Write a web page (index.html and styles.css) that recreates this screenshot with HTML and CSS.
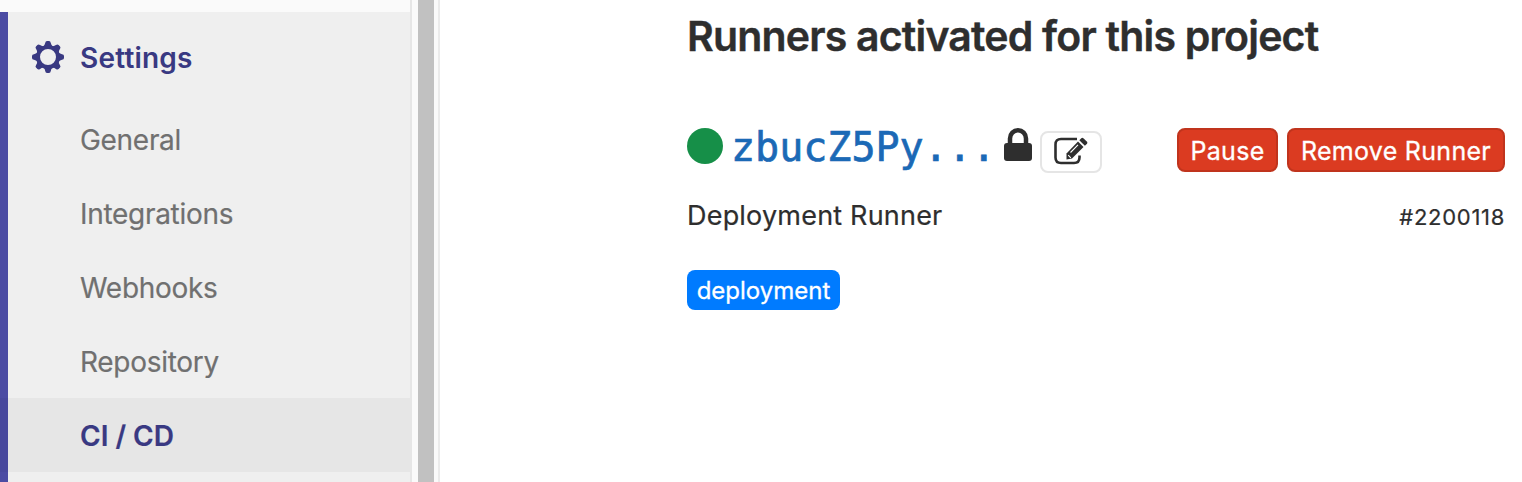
FILE: index.html
```
<!DOCTYPE html>
<html lang="en">
<head>
<meta charset="utf-8">
<title>CI / CD Settings</title>
<link rel="stylesheet" href="styles.css">
</head>
<body>
<div class="page">
  <aside class="sidebar">
    <nav class="menu">
      <a class="menu-title">
        <svg class="gear" viewBox="0 0 32 32" width="32" height="32"><g fill="#393982"><path id="t" d="M10.500 6.500Q12.800 4.500 13.200 2Q13.500 0 15 0H17Q18.500 0 18.800 2Q19.200 4.500 21.500 6.500Z"/><use href="#t" transform="rotate(45 16 16)"/><use href="#t" transform="rotate(90 16 16)"/><use href="#t" transform="rotate(135 16 16)"/><use href="#t" transform="rotate(180 16 16)"/><use href="#t" transform="rotate(225 16 16)"/><use href="#t" transform="rotate(270 16 16)"/><use href="#t" transform="rotate(315 16 16)"/></g><circle cx="16" cy="16" r="10" fill="#efefef" stroke="#393982" stroke-width="4"/></svg>
        <span class="title-text">Settings</span>
      </a>
      <a class="item">General</a>
      <a class="item">Integrations</a>
      <a class="item">Webhooks</a>
      <a class="item">Repository</a>
      <a class="item active">CI / CD</a>
    </nav>
  </aside>
  <div class="scroll"><div class="thumb"></div></div>
  <main class="content">
    <h1>Runners activated for this project</h1>
    <div class="runner">
      <span class="status"></span>
      <a class="token">zbucZ5Py...</a>
      <svg class="lock" viewBox="0 0 28 34" width="28" height="34"><path d="M6 17V10.500a8 8.250 0 0 1 16 0V17" fill="none" stroke="#2e2e2e" stroke-width="4.500"/><rect y="15" width="28" height="18" rx="3" fill="#2e2e2e"/></svg>
      <a class="edit"><svg viewBox="0 0 34 28" width="34" height="28"><path d="M23 2H7Q1.500 2 1.500 7.500V20.500Q1.500 26 7 26H20Q25.500 26 25.500 20.500V18.500" fill="none" stroke="#2e2e2e" stroke-width="2.600"/><path d="M12.500 16.500L24 4.500L29.500 10L18 21.500L12.500 22.500Z" fill="#2e2e2e"/><path d="M25.300 3.200L27.300 1.200Q28.300.4 29.400 1.200L33 4.800Q33.800 5.800 33 6.800L30.900 8.800Z" fill="#2e2e2e"/><path d="M16.500 15.500L24 7.800M14.200 18.200L16.800 20.800" stroke="#fff" stroke-width="1.100"/></svg></a>
      <div class="actions">
        <button class="pause">Pause</button>
        <button class="remove">Remove Runner</button>
      </div>
    </div>
    <div class="details"><span class="description">Deployment Runner</span><span class="number">#2200118</span></div>
    <span class="tag">deployment</span>
  </main>
</div>
</body>
</html>
```
FILE: styles.css
```
* { box-sizing: border-box; }
body { margin: 0; background: #fff; font-family: Inter, "Liberation Sans", sans-serif; color: #2e2e2e; }
.page { display: flex; width: 1522px; height: 482px; overflow: hidden; }
.sidebar { width: 412px; flex: none; padding-top: 12px; background: #fafafa; border-right: 2px solid #e6e6e6; }
.menu { height: 470px; background: #efefef; box-shadow: inset 8px 0 0 #4b4ba3; font-size: 28px; }
.menu-title { display: flex; align-items: center; height: 90px; padding: 0 0 0 32px; gap: 16px; color: #393982; font-weight: 600; line-height: 34px; }
.title-text { padding-top: 2px; letter-spacing: .2px; }
.item { display: block; height: 74px; padding: 1px 0 0 80px; line-height: 74px; color: #707070; white-space: nowrap; letter-spacing: -.3px; -webkit-text-stroke: .2px; }
.active { color: #393982; font-weight: 600; letter-spacing: 0; background: rgba(0, 0, 0, .035); }
.scroll { width: 28px; flex: none; padding-left: 6px; background: #fafafa; border-right: 2px solid #ebebeb; }
.thumb { width: 16px; height: 482px; background: #c1c1c1; }
.content { flex: 1; padding: 0 17px 0 247px; white-space: nowrap; }
h1 { margin: 0; padding-top: 11px; height: 128px; font-size: 41px; line-height: 50px; font-weight: 600; letter-spacing: -.8px; -webkit-text-stroke: .4px; }
.runner { display: flex; align-items: flex-start; height: 44px; }
.status { width: 36px; height: 36px; border-radius: 50%; background: #168f48; }
.token { margin: -1px 0 0 8px; width: 273px; color: #1b69b6; font: 40px/40px "DejaVu Sans Mono", monospace; -webkit-text-stroke: .7px; }
.edit { display: flex; align-items: center; justify-content: center; width: 62px; height: 42px; margin: 3px 0 0 8px; border: 2px solid #e5e5e5; border-radius: 8px; }
.edit svg { display: block; margin-bottom: 2px; }
.actions { display: flex; gap: 9px; margin-left: auto; }
button { height: 44px; padding: 2px 0 0; border: 2px solid #c0341d; border-radius: 8px; background: #db3b21; color: #fff; font: 25px/36px Inter, "Liberation Sans", sans-serif; letter-spacing: .3px; -webkit-text-stroke: .3px; }
.pause { width: 101px; }
.remove { width: 218px; }
.details { display: flex; justify-content: space-between; height: 98px; padding-top: 26px; font-size: 27px; line-height: 36px; letter-spacing: .2px; -webkit-text-stroke: .2px; }
.number { font-size: 22px; line-height: 38px; letter-spacing: .7px; }
.tag { display: flex; justify-content: center; width: 153px; height: 40px; padding-top: 1px; border-radius: 8px; background: #007bff; color: #fff; font-size: 24px; line-height: 40px; -webkit-text-stroke: .3px; }
```
